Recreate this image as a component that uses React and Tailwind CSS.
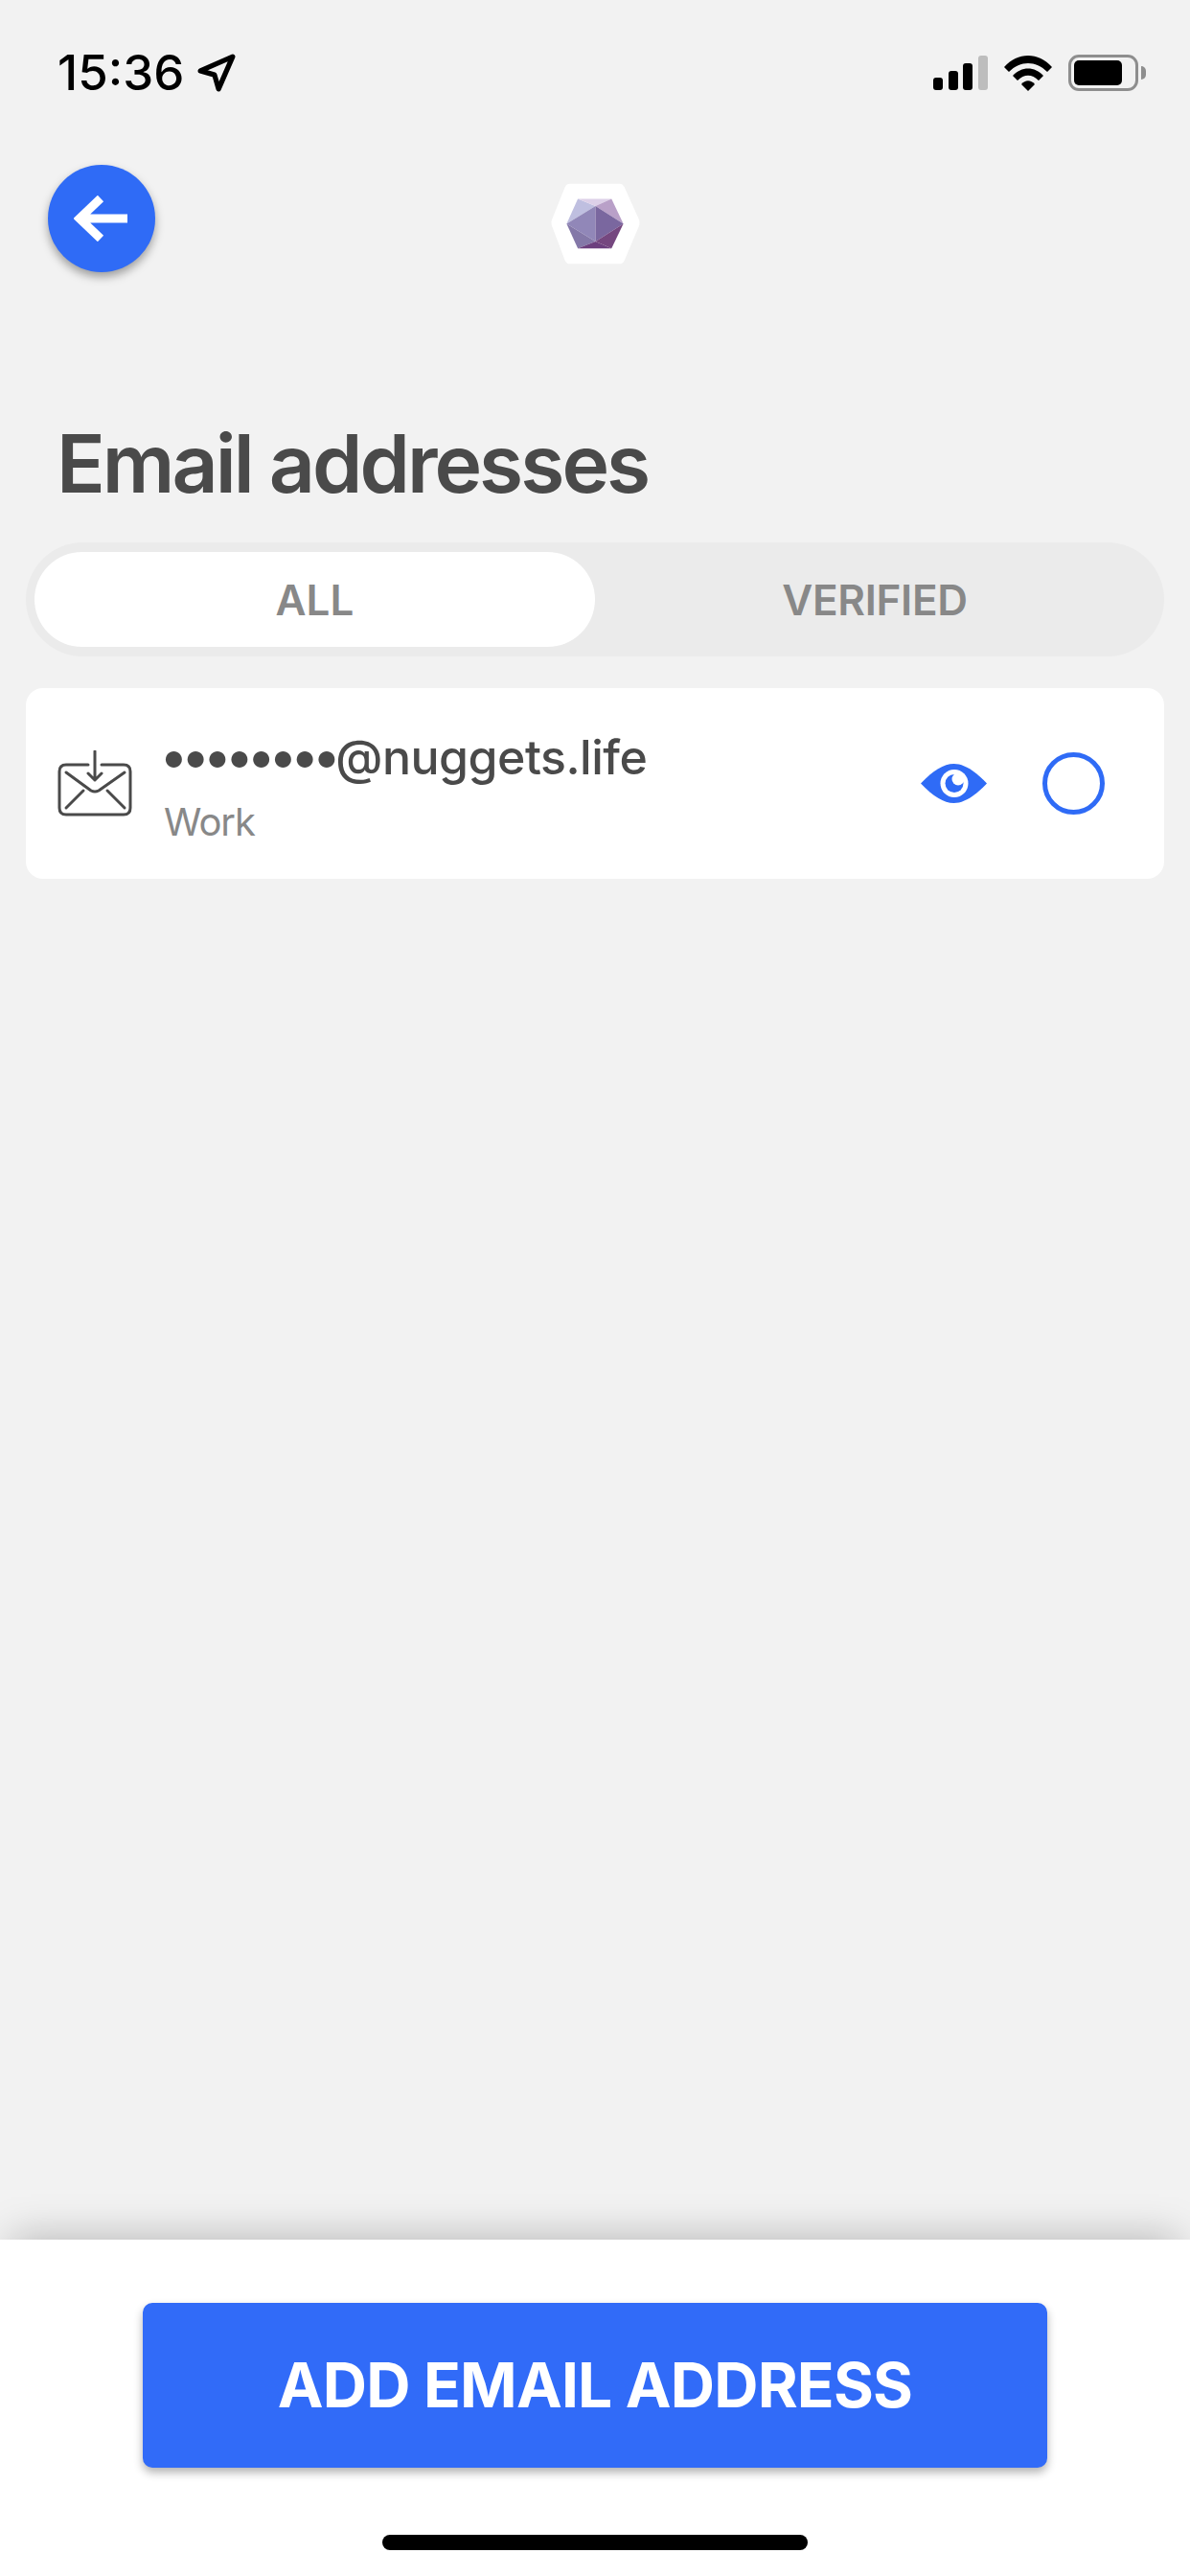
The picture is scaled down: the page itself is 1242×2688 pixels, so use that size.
import React from "react";

const font = { fontFamily: "Inter, sans-serif" };

function StatusIcons() {
  return (
    <div className="flex items-center gap-[17px]">
      {/* signal */}
      <svg width="57" height="36" viewBox="0 0 57 36">
        <rect x="0" y="23" width="10" height="13" rx="3" fill="#000" />
        <rect x="16" y="16" width="10" height="20" rx="3" fill="#000" />
        <rect x="31" y="8" width="10" height="28" rx="3" fill="#000" />
        <rect x="47" y="0" width="10" height="36" rx="3" fill="#bdbdbd" />
      </svg>
      {/* wifi */}
      <svg width="50" height="37" viewBox="0 0 50 37">
        <path d="M0 12 C14 -4 36 -4 50 12 L45 17 C33 5 17 5 5 17 Z" fill="#000" />
        <path d="M9 21 C18 11 32 11 41 21 L36 26 C29 19 21 19 14 26 Z" fill="#000" />
        <path d="M18 30 C22 25 28 25 32 30 L25 37 Z" fill="#000" />
      </svg>
      {/* battery */}
      <div className="flex items-center gap-[3px]">
        <div className="w-[73px] h-[38px] rounded-[11px] border-[3px] border-[#8e8e8e] p-[3px]">
          <div className="w-[50px] h-full rounded-[5px] bg-black" />
        </div>
        <div className="w-[5px] h-[14px] rounded-r-full bg-[#8e8e8e]" />
      </div>
    </div>
  );
}

function Gem() {
  return (
    <svg width="97" height="87" viewBox="100 60 290 260" className="mt-[18px]">
      <path
        d="M165 65 H320 Q330 65 335 75 L380 175 Q385 187 380 199 L335 305 Q330 315 320 315 H165 Q155 315 150 305 L110 199 Q105 187 110 175 L150 75 Q155 65 165 65 Z"
        fill="#fff"
      />
      <polygon points="190,112 245,135 155,190" fill="#bfbfe0" />
      <polygon points="190,112 295,112 245,135" fill="#ddd0e8" />
      <polygon points="295,112 332,190 245,135" fill="#b9a0c8" />
      <polygon points="155,190 245,135 245,245" fill="#9187b8" />
      <polygon points="245,135 332,190 245,245" fill="#7a679f" />
      <polygon points="155,190 245,245 190,267" fill="#8478a8" />
      <polygon points="190,267 245,245 295,267" fill="#6c3f7e" />
      <polygon points="245,245 332,190 295,267" fill="#75477f" />
    </svg>
  );
}

function MailIcon() {
  return (
    <svg width="78" height="70" viewBox="60 782 78 70" fill="none" stroke="#4a4a4a" strokeWidth="3" strokeLinecap="round" strokeLinejoin="round">
      <path d="M92 797 H69 Q62 797 62 804 V842 Q62 849 69 849 H129 Q136 849 136 842 V804 Q136 797 129 797 H106" />
      <path d="M99 783 V813 M92 806 L99 813 L106 806" />
      <path d="M69 805 L95 824 Q99 826 103 824 L130 805" />
      <path d="M69 842 L87 824 M112 824 L130 842" />
    </svg>
  );
}

function EyeIcon() {
  return (
    <svg width="69" height="41" viewBox="0 0 69 41">
      <path d="M0 20.5 C13 7 24 0 34.5 0 C45 0 56 7 69 20.5 C56 34 45 41 34.5 41 C24 41 13 34 0 20.5 Z" fill="#2f6bf6" />
      <circle cx="35" cy="20.5" r="14.5" fill="#fff" />
      <circle cx="35" cy="20.5" r="9.5" fill="#2f6bf6" />
      <circle cx="39" cy="16" r="6.5" fill="#fff" />
    </svg>
  );
}

export default function App() {
  return (
    <div style={font} className="w-[1242px] h-[2688px] bg-[#f2f2f2] flex flex-col overflow-hidden">
      <div className="flex-1 flex flex-col">
        {/* Status bar */}
        <div className="h-[172px] pt-[57px] pl-[60px] pr-[46px] flex justify-between items-start">
          <div className="flex items-center gap-[14px] h-[38px]">
            <span className="text-[51px] leading-[38px] font-medium text-black">15:36</span>
            <svg width="40" height="40" viewBox="0 0 38 38" fill="none">
              <path d="M3 17 L35 3 L21 35 L17 21 Z" stroke="#000" strokeWidth="5" strokeLinejoin="round" />
            </svg>
          </div>
          <StatusIcons />
        </div>

        {/* Header */}
        <div className="grid grid-cols-[1fr_auto_1fr] items-start px-[50px]">
          <button className="w-[112px] h-[112px] rounded-full bg-[#2f6bf6] shadow-[0_5px_10px_rgba(0,0,0,0.35)] flex items-center justify-center">
            <svg width="58" height="48" viewBox="0 0 58 48" fill="none" stroke="#fff" strokeWidth="9">
              <path d="M56 24 H6 M28 3 L6 24 L28 45" />
            </svg>
          </button>
          <Gem />
          <div />
        </div>

        {/* Title */}
        <h1 className="mt-[158px] pl-[59px] text-[84px] leading-[84px] tracking-[-3px] font-semibold text-[#4a4a4a]">Email addresses</h1>

        {/* Tabs */}
        <div className="mt-[40px] mx-[27px] h-[119px] rounded-full bg-[#ebebeb] p-[10px] pl-[9px] flex">
          <div className="w-[585px] rounded-full bg-white flex items-center justify-center text-[44px] font-semibold text-[#888888]">ALL</div>
          <div className="flex-1 flex items-center justify-center text-[44px] tracking-[-0.3px] font-semibold text-[#888888]">VERIFIED</div>
        </div>

        {/* Email row */}
        <div className="mt-[33px] mx-[27px] h-[199px] rounded-[18px] bg-white flex items-center pl-[33px]">
          <MailIcon />
          <div className="ml-[33px] flex-1 self-start mt-[41px]">
            <div className="text-[50px] leading-[60px] tracking-[-0.5px] font-medium text-[#4a4a4a]">
              <span className="-ml-[4px] text-[54px] tracking-[-6px]">••••••••</span>
              <span className="ml-[1px]">@nuggets.life</span>
            </div>
            <div className="text-[40px] leading-[48px] mt-[14px] tracking-[-1px] text-[#888888]">Work</div>
          </div>
          <EyeIcon />
          <div className="ml-[58px] mr-[62px] w-[65px] h-[65px] rounded-full border-[5px] border-[#2f6bf6]" />
        </div>
      </div>

      {/* Footer */}
      <div className="h-[351px] bg-white shadow-[0_-14px_40px_-12px_rgba(0,0,0,0.25)] flex flex-col items-center pt-[66px]">
        <button className="w-[944px] h-[172px] rounded-[10px] bg-[#316bf8] shadow-[0_5px_10px_rgba(0,0,0,0.3)] text-white text-[64px] tracking-[-0.8px] font-bold">
          ADD EMAIL ADDRESS
        </button>
        <div className="mt-[70px] w-[444px] h-[16px] rounded-full bg-black" />
      </div>
    </div>
  );
}
